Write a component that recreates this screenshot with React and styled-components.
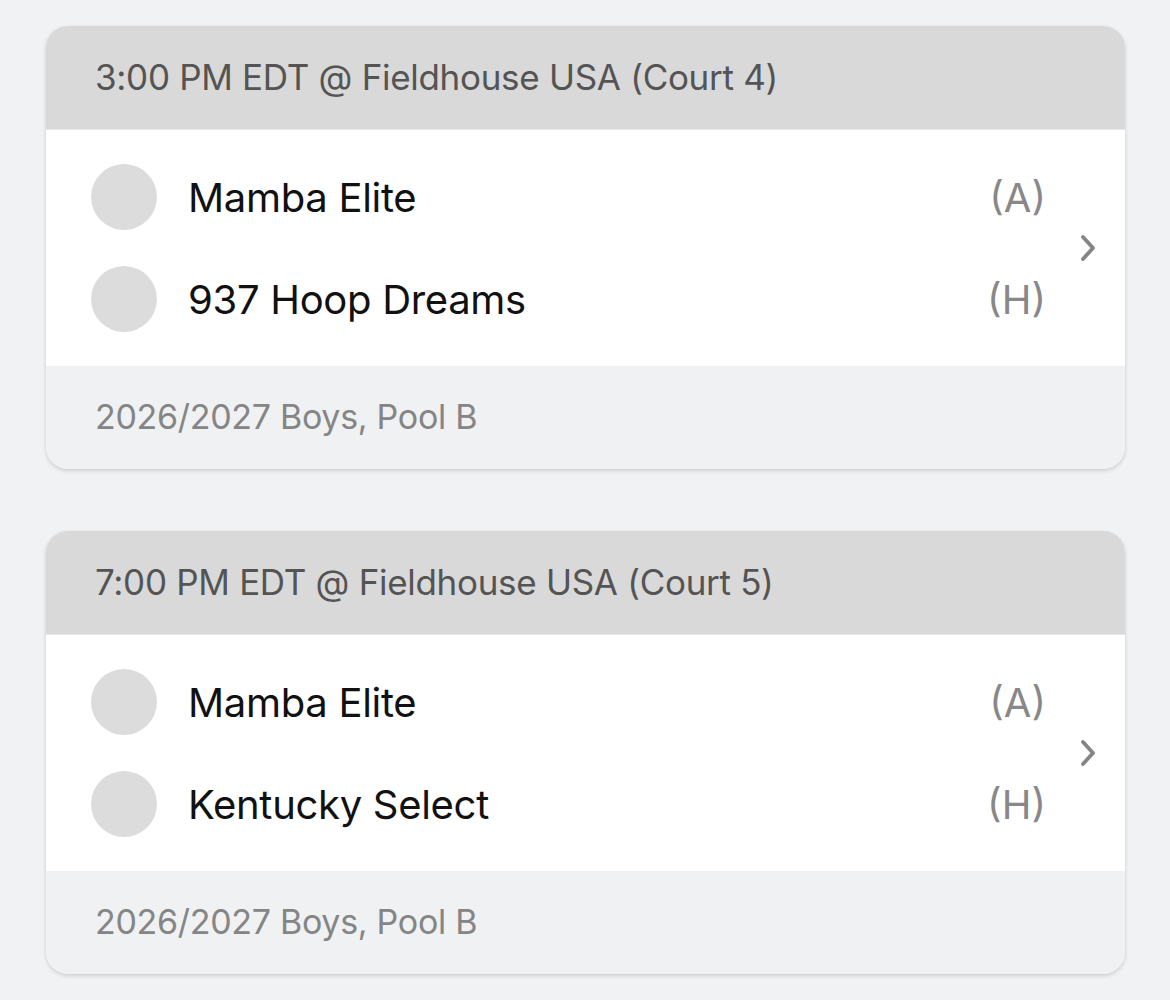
import React from "react";
import styled, { createGlobalStyle } from "styled-components";

const Global = createGlobalStyle`
  html, body { margin: 0; padding: 0; background: #f1f2f4; }
  body { font-family: Inter, "Noto Sans", sans-serif; -webkit-font-smoothing: antialiased; }
`;

const Page = styled.div`
  display: flex;
  flex-direction: column;
  gap: 62px;
  padding: 26px 45px 26px 46px;
  box-sizing: border-box;
  width: 1170px;
`;

const Card = styled.div`
  border-radius: 22px;
  overflow: hidden;
  background: #fff;
  box-shadow: 0 2px 4px rgba(0, 0, 0, 0.14), 0 0 1px rgba(0, 0, 0, 0.14);
`;

const Header = styled.div`
  height: 104px;
  box-sizing: border-box;
  background: #d9d9d9;
  border-bottom: 1px solid #e8e8e8;
  display: flex;
  align-items: center;
  padding: 0 49px 2px;
  font-size: 35px;
  color: #545454;
  letter-spacing: -0.3px;
`;

const Body = styled.div`
  display: flex;
  align-items: center;
  padding: 34px 29px 34px 45px;
  gap: 34px;
  background: #fff;
`;

const Teams = styled.div`
  flex: 1;
  display: flex;
  flex-direction: column;
  gap: 36px;
`;

const TeamRow = styled.div`
  display: flex;
  align-items: center;
  height: 66px;
`;

const Logo = styled.div`
  width: 66px;
  height: 66px;
  border-radius: 50%;
  background: #dcdcdc;
  flex-shrink: 0;
`;

const TeamName = styled.div`
  flex: 1;
  margin-left: 31px;
  font-size: 40px;
  color: #111;
  letter-spacing: -0.3px;
`;

const Side = styled.div`
  font-size: 40px;
  color: #888;
`;

const Footer = styled.div`
  height: 103px;
  box-sizing: border-box;
  background: #f0f1f3;
  display: flex;
  align-items: center;
  padding: 0 49px 2px;
  font-size: 34px;
  color: #858585;
  letter-spacing: -0.3px;
`;

const Chevron = () => (
  <svg width="16" height="28" viewBox="0 0 16 28" fill="none">
    <path d="M3 3 L13 14 L3 25" stroke="#858585" strokeWidth="3.8" strokeLinecap="round" strokeLinejoin="round" />
  </svg>
);

const games = [
  {
    header: "3:00 PM EDT @ Fieldhouse USA (Court 4)",
    teams: [
      { name: "Mamba Elite", side: "(A)" },
      { name: "937 Hoop Dreams", side: "(H)" },
    ],
    footer: "2026/2027 Boys, Pool B",
  },
  {
    header: "7:00 PM EDT @ Fieldhouse USA (Court 5)",
    teams: [
      { name: "Mamba Elite", side: "(A)" },
      { name: "Kentucky Select", side: "(H)" },
    ],
    footer: "2026/2027 Boys, Pool B",
  },
];

export default function App() {
  return (
    <>
      <Global />
      <Page>
        {games.map((g, i) => (
          <Card key={i}>
            <Header>{g.header}</Header>
            <Body>
              <Teams>
                {g.teams.map((t, j) => (
                  <TeamRow key={j}>
                    <Logo />
                    <TeamName>{t.name}</TeamName>
                    <Side>{t.side}</Side>
                  </TeamRow>
                ))}
              </Teams>
              <Chevron />
            </Body>
            <Footer>{g.footer}</Footer>
          </Card>
        ))}
      </Page>
    </>
  );
}
